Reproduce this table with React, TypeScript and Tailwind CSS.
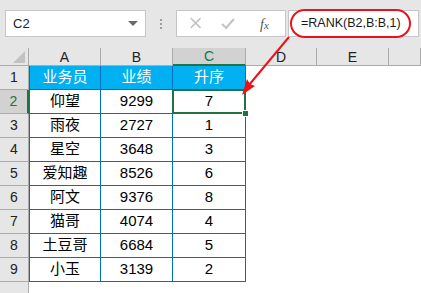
import React from 'react';

const rows = [
  { name: '仰望', score: '9299', rank: '7' },
  { name: '雨夜', score: '2727', rank: '1' },
  { name: '星空', score: '3648', rank: '3' },
  { name: '爱知趣', score: '8526', rank: '6' },
  { name: '阿文', score: '9376', rank: '8' },
  { name: '猫哥', score: '4074', rank: '4' },
  { name: '土豆哥', score: '6684', rank: '5' },
  { name: '小玉', score: '3139', rank: '2' },
];

const colHeaders = ['A', 'B', 'C', 'D', 'E', ''];

function FormulaBar() {
  return (
    <div className="h-[48px] bg-[#e6e6e6] flex items-start pt-[10px] pl-[5px]">
      <div className="w-[141px] h-[27px] bg-white border border-[#c6c6c6] flex items-center justify-between pl-[7px] pr-[7px]">
        <span className="text-[13px] text-[#222]">C2</span>
        <span className="w-0 h-0 border-l-[5px] border-r-[5px] border-t-[5px] border-l-transparent border-r-transparent border-t-[#6a6a6a]" />
      </div>
      <div className="w-[30px] h-[27px] flex flex-col items-center justify-center gap-[2px]">
        <span className="w-[2px] h-[2px] bg-[#9e9e9e]" />
        <span className="w-[2px] h-[2px] bg-[#9e9e9e]" />
        <span className="w-[2px] h-[2px] bg-[#9e9e9e]" />
      </div>
      <div className="w-[110px] h-[27px] bg-white border border-[#c6c6c6] flex items-center">
        <svg width="110" height="25" viewBox="0 0 110 25">
          <path d="M14 7 L24 17 M24 7 L14 17" stroke="#c4c4c4" strokeWidth="1.6" fill="none" />
          <path d="M46 13 L50 17 L58 8" stroke="#c4c4c4" strokeWidth="2.2" fill="none" />
        </svg>
      </div>
      <div className="relative w-0">
        <span className="absolute left-[-26px] top-[4px] text-[14px] italic text-[#555] font-['Liberation_Serif',serif]">
          f<span className="text-[11px]">x</span>
        </span>
      </div>
      <div className="ml-[2px] w-[131px] h-[27px] bg-white border border-[#c6c6c6] flex items-center pl-[12px]">
        <span className="text-[12.5px] text-[#1a1a1a]">=RANK(B2,B:B,1)</span>
      </div>
    </div>
  );
}

function Sheet() {
  return (
    <div className="grid grid-cols-[29px_72px_72px_73px_71px_72px_1fr] grid-rows-[18px_repeat(9,24px)_1fr] h-[245px]">
      {/* header row */}
      <div className="relative bg-[#e6e6e6] border-r border-b border-[#ababab]">
        <svg className="absolute right-[3px] bottom-[2px]" width="12" height="12" viewBox="0 0 12 12">
          <polygon points="12,0 12,12 0,12" fill="#c2c2c2" />
        </svg>
      </div>
      {colHeaders.map((c, i) => (
        <div
          key={i}
          className={
            c === 'C'
              ? 'flex items-end justify-center bg-[#d2d2d2] border-r border-[#ababab] border-b-2 border-b-[#217346] text-[14px] leading-[16px] text-[#217346]'
              : 'flex items-end justify-center bg-[#e6e6e6] border-r border-b border-[#ababab] text-[14px] leading-[16px] text-[#222]'
          }
        >
          {c}
        </div>
      ))}

      {/* row 1 */}
      <div className="flex items-end justify-center bg-[#e6e6e6] border-b border-r border-[#ababab] text-[14px] pb-[1px] text-[#222]">1</div>
      <div className="flex items-center justify-center bg-[#00b0f0] border-l border-r border-b border-[#0070c0] text-[15px] text-white">业务员</div>
      <div className="flex items-center justify-center bg-[#00b0f0] border-r border-b border-[#0070c0] text-[15px] text-white">业绩</div>
      <div className="flex items-center justify-center bg-[#00b0f0] border-r border-b border-[#0070c0] text-[15px] text-white">升序</div>
      <div />
      <div />
      <div />

      {rows.map((r, i) => {
        const selected = i === 0;
        return (
          <React.Fragment key={i}>
            <div
              className={
                selected
                  ? 'flex items-end justify-center bg-[#d2d2d2] border-b border-[#ababab] border-r-2 border-r-[#217346] text-[14px] pb-[1px] text-[#217346]'
                  : 'flex items-end justify-center bg-[#e6e6e6] border-b border-r border-[#ababab] text-[14px] pb-[1px] text-[#222]'
              }
            >
              {i + 2}
            </div>
            <div className="flex items-center justify-center border-l border-r border-b border-[#0070c0] text-[15px] text-black">{r.name}</div>
            <div className="flex items-center justify-center border-r border-b border-[#0070c0] text-[15px] text-black">{r.score}</div>
            <div className="relative flex items-center justify-center border-r border-b border-[#0070c0] text-[15px] text-black">
              {r.rank}
              {selected && (
                <>
                  <span className="absolute left-[-1px] top-[-1px] right-[-1px] bottom-[-1px] border-2 border-[#217346]" />
                  <span className="absolute z-10 right-[-4px] bottom-[-4px] w-[7px] h-[7px] bg-[#217346] border border-white" />
                </>
              )}
            </div>
            <div />
            <div />
            <div />
          </React.Fragment>
        );
      })}

      <div className="bg-[#e6e6e6] border-r border-[#ababab]" />
      <div className="col-span-6" />
    </div>
  );
}

function Annotation() {
  return (
    <>
      <div className="absolute left-[290px] top-[9px] w-[121px] h-[29px] rounded-full border-2 border-[#e8141c]" />
      <svg className="absolute left-0 top-0 pointer-events-none" width="421" height="293" viewBox="0 0 421 293">
        <line x1="289" y1="37" x2="249" y2="85" stroke="#e8141c" strokeWidth="2" />
        <polygon points="242,95 255,86 250,84 247,79" fill="#e8141c" />
      </svg>
    </>
  );
}

export default function App() {
  return (
    <div className="relative w-[421px] h-[293px] overflow-hidden bg-white font-['Liberation_Sans','Noto_Sans_CJK_SC',sans-serif]">
      <FormulaBar />
      <Sheet />
      <Annotation />
    </div>
  );
}
